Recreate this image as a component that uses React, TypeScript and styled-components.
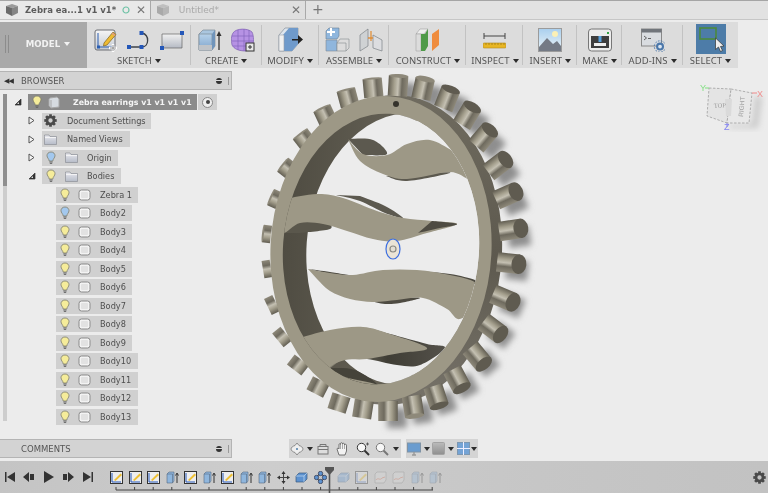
import React from "react";
import styled, { createGlobalStyle } from "styled-components";

const Global = createGlobalStyle`
  html, body { margin: 0; padding: 0; background: #ececec; }
  #root { width: 768px; height: 493px; overflow: hidden; }
`;

const Shell = styled.div`
  width: 768px; height: 493px; display: flex; flex-direction: column; overflow: hidden;
  background: #ececec; font-family: "DejaVu Sans", sans-serif; filter: blur(0.35px);
`;
const TabBar = styled.div`
  height: 18px; display: flex; background: #e2e2e2; border-top: 1px solid #a5a5a5;
  border-bottom: 1px solid #c6c6c6; flex: none;
`;
const Tab = styled.div<{ $w: number; $active?: boolean }>`
  width: ${p => p.$w}px; box-sizing: border-box; display: flex; align-items: center; gap: 6px; padding: 0 4px 0 5px;
  background: ${p => (p.$active ? "#e9e9e9" : "#dfdfdf")}; border-right: 1px solid #a9a9a9;
  font-size: ${p => (p.$active ? 8.5 : 9)}px; font-weight: ${p => (p.$active ? 700 : 400)}; color: ${p => (p.$active ? "#5c5c5c" : "#a9a9a9")};
`;
const TabLabel = styled.span<{ $w: number }>` width: ${p => p.$w}px; white-space: nowrap; `;
const TabX = styled.span` margin-left: auto; font-size: 12px; color: #777; font-weight: 400; line-height: 1; `;
const PlusTab = styled.span` margin-left: 6px; font-size: 14px; color: #777; line-height: 17px; `;

const Toolbar = styled.div`
  display: flex; width: 738px; height: 46px; margin-top: 2px; background: #dcdcdc; flex: none;
`;
const ModelBlock = styled.div`
  width: 87px; background: #a9a9a9; display: flex; align-items: center; justify-content: center; gap: 4px;
  color: #f2f2f2; font-size: 8.6px; font-weight: 700; position: relative; padding: 0 0 2px 9px; box-sizing: border-box;
`;
const Grip = styled.span`
  position: absolute; left: 5px; top: 13px; width: 2px; height: 18px;
  border-left: 1px solid #8c8c8c; border-right: 1px solid #8c8c8c;
`;
const Group = styled.div<{ $w: number; $last?: boolean }>`
  width: ${p => p.$w}px; box-sizing: border-box; display: flex; flex-direction: column; align-items: center;
  position: relative;
  &::after {
    content: ""; display: ${p => (p.$last ? "none" : "block")}; position: absolute; right: 0; top: 3px; bottom: 3px;
    width: 1px; background: #c2c2c2;
  }
`;
const GroupIcons = styled.div<{ $gap?: number }>`
  height: 32px; display: flex; align-items: center; gap: ${p => p.$gap ?? 9}px; padding-top: 3px; box-sizing: border-box;
`;
const GroupLabel = styled.div`
  font-family: "Noto Sans", sans-serif; font-size: 9.5px; color: #555; line-height: 13px; white-space: nowrap;
  display: flex; align-items: center; gap: 3px; letter-spacing: 0.05px;
`;
const Caret = styled.span<{ $c?: string }>`
  display: inline-block; width: 0; height: 0; border-left: 3.5px solid transparent; border-right: 3.5px solid transparent;
  border-top: 4.5px solid ${p => p.$c ?? "#2c2c2c"};
`;
const SelectIcon = styled.div`
  width: 30px; height: 30px; background: #4d7ca8; margin-top: -1px; display: flex;
`;

const Workspace = styled.div` flex: 1; display: flex; min-height: 0; `;
const Sidebar = styled.div`
  width: 232px; flex: none; display: flex; flex-direction: column; padding-top: 3px; box-sizing: border-box; position: relative; z-index: 1;
`;
const PanelHead = styled.div`
  height: 19px; box-sizing: border-box; background: #d3d3d3; border: 1px solid #b4b4b4; border-left: none;
  display: flex; align-items: center; font-size: 8.5px; color: #555; flex: none; padding: 0 2px 0 4px;
`;
const HeadArrow = styled.span` width: 17px; font-size: 7px; color: #333; letter-spacing: -1px; `;
const HeadTitle = styled.span` flex: 1; padding-left: 0; `;
const HeadTitleIndented = styled.span` flex: 1; padding-left: 17px; `;
const HeadBtn = styled.span`
  width: 6px; height: 6px; border-radius: 50%; background: #333; margin-right: 6px;
  &::after { content: ""; display: block; height: 1px; background: #ddd; margin-top: 2.5px; }
`;
const HeadBar = styled.span` width: 1px; height: 8px; background: #999; `;
const TreeArea = styled.div` flex: 1; display: flex; position: relative; min-height: 0; padding-top: 4px; `;
const Scroll = styled.div`
  width: 4px; margin-left: 3px; height: 327px; background: #cdcdcd; position: relative; flex: none;
  &::before { content: ""; position: absolute; left: 0; top: 0; width: 4px; height: 92px; background: #8f8f8f; }
`;
const Tree = styled.div` display: flex; flex-direction: column; `;
const Row = styled.div<{ $indent: number }>`
  height: 18.5px; display: flex; align-items: flex-start; margin-left: ${p => p.$indent}px; position: relative;
`;
const Twist = styled.span`
  width: 14px; height: 16px; display: flex; align-items: center; flex: none;
`;
const Chip = styled.div<{ $w: number; $root?: boolean; $pad?: number }>`
  width: ${p => p.$w}px; height: 16px; box-sizing: border-box; background: ${p => (p.$root ? "#8b8b8b" : "#d0d0d0")};
  display: flex; align-items: center; padding-left: ${p => p.$pad ?? 4}px; font-size: ${p => (p.$root ? 7.85 : 8.2)}px;
  color: ${p => (p.$root ? "#f5f5f5" : "#4e4e4e")}; font-weight: ${p => (p.$root ? 700 : 400)}; white-space: nowrap; flex: none;
`;
const RadioChip = styled.div`
  width: 19px; height: 16px; background: #d0d0d0; display: flex; align-items: center; justify-content: center; margin-left: 1px;
`;
const Radio = styled.span`
  width: 9px; height: 9px; border-radius: 50%; border: 1px solid #888; background: #eee; display: flex; align-items: center; justify-content: center;
  &::after { content: ""; width: 4px; height: 4px; border-radius: 50%; background: #444; }
`;
const IconSlot = styled.span<{ $w: number }>` width: ${p => p.$w}px; display: flex; flex: none; align-items: center; `;
const CommentsHead = styled(PanelHead)` margin-bottom: 3px; `;

const Viewport = styled.div` flex: 1; position: relative; min-width: 0; `;
const Scene = styled.svg` position: absolute; left: 0; top: 0; `;
const NavBars = styled.div`
  position: absolute; left: 57px; bottom: 3px; display: flex; gap: 5px;
`;
const NavBar = styled.div<{ $w: number }>`
  width: ${p => p.$w}px; height: 19px; background: #d4d4d4; display: flex; align-items: center; box-sizing: border-box;
`;
const NavSlot = styled.span<{ $w: number }>` width: ${p => p.$w}px; display: flex; align-items: center; justify-content: center; flex: none; `;

const Timeline = styled.div`
  height: 32px; flex: none; background: linear-gradient(90deg, #c4c4c4, #cdcdcd 35%, #c6c6c6 70%, #c2c2c2); display: flex; align-items: center; position: relative;
`;
const Transport = styled.div` display: flex; width: 110px; box-sizing: border-box; flex: none; margin-top: -1px; `;
const TBtn = styled.span` width: 19.5px; display: flex; justify-content: center; flex: none; `;
const Track = styled.div` display: flex; position: relative; height: 32px; align-items: flex-start; padding-top: 10px; box-sizing: border-box; flex: none; `;
const TItem = styled.span<{ $faded?: boolean; $w: number }>`
  width: ${p => p.$w}px; display: flex; flex: none; opacity: ${p => (p.$faded ? 0.33 : 1)};
`;
const Marker = styled.svg` position: absolute; left: 214px; top: 6px; `;
const Ruler = styled.svg` position: absolute; left: 0; top: 25px; `;
const TimelineGear = styled.span` position: absolute; right: 2px; top: 10px; display: flex; `;

/* ---------- icons ---------- */
const Cube = ({ s = 14, o = 1 }: { s?: number; o?: number }) => (
  <svg width={s} height={s} viewBox="0 0 14 14" opacity={o}>
    <path d="M1 3 L7 1 L13 3 L7 5Z" fill="#9a9a9a" />
    <path d="M1 3 L7 5 V13 L1 10Z" fill="#6a6a6a" />
    <path d="M13 3 L7 5 V13 L13 10Z" fill="#858585" />
  </svg>
);
const Bulb = ({ c = "#f5ec9a" }: { c?: string }) => (
  <svg width="10" height="14" viewBox="0 0 10 14">
    <path d="M5 1 C2.3 1 1 2.9 1 4.7 C1 6.7 3 7.8 3.2 10 H6.8 C7 7.8 9 6.7 9 4.7 C9 2.9 7.7 1 5 1Z" fill={c} stroke="#7d7d6c" strokeWidth="0.8" />
    <path d="M3.4 11 H6.6 M3.8 12.4 H6.2" stroke="#666" strokeWidth="1" />
  </svg>
);
const BodyIcon = () => (
  <svg width="13" height="12" viewBox="0 0 13 12">
    <rect x="1" y="1" width="11" height="10" rx="2.5" fill="#f3f3f3" stroke="#8b8b8b" />
    <rect x="3" y="3" width="7" height="6" rx="1" fill="#e2e2e2" />
  </svg>
);
const RootBody = () => (
  <svg width="12" height="13" viewBox="0 0 12 13">
    <path d="M2 2 L9 1 L11 3 V11 L3 12 L1 10 V3Z" fill="#d6dbe0" stroke="#a7a7a7" />
    <path d="M3 4 V12" stroke="#a7a7a7" />
  </svg>
);
const Folder = () => (
  <svg width="13" height="11" viewBox="0 0 13 11">
    <defs><linearGradient id="fd" x1="0" y1="0" x2="0" y2="1"><stop offset="0" stopColor="#e8e8ee" /><stop offset="1" stopColor="#b6bcc8" /></linearGradient></defs>
    <path d="M0.5 2.5 V1 H5 L6 2.5 H12.5 V10.5 H0.5Z" fill="url(#fd)" stroke="#8c8f96" strokeWidth="0.7" />
    <path d="M1 3.6 H12" stroke="#f5f5f5" />
  </svg>
);
const Gear = ({ s = 13, c = "#555" }: { s?: number; c?: string }) => (
  <svg width={s} height={s} viewBox="0 0 24 24">
    <circle cx="12" cy="12" r="6.5" fill="none" stroke={c} strokeWidth="5" />
    {[0, 45, 90, 135, 180, 225, 270, 315].map(a => (
      <rect key={a} x="9.5" y="0.5" width="5" height="5" fill={c} transform={`rotate(${a} 12 12)`} />
    ))}
  </svg>
);
const TwistOpen = () => (
  <svg width="8" height="8" viewBox="0 0 8 8"><path d="M7 1 V7 H1Z" fill="#333" stroke="#333" strokeWidth="0.7" /><path d="M5 4 V6 H3Z" fill="#ddd" /></svg>
);
const TwistClosed = () => (
  <svg width="7" height="9" viewBox="0 0 7 9"><path d="M1 1 L6 4.5 L1 8Z" fill="#f4f4f4" stroke="#555" /></svg>
);

const SketchIcon = () => (
  <svg width="24" height="24" viewBox="0 0 24 24">
    <defs><linearGradient id="sk" x1="0" y1="0" x2="0" y2="1"><stop offset="0" stopColor="#f6f6f6" /><stop offset="1" stopColor="#c3c9d2" /></linearGradient></defs>
    <rect x="1" y="2" width="20" height="20" rx="2" fill="url(#sk)" stroke="#6c6f75" />
    <path d="M4 5 V19 H18" fill="none" stroke="#2a5db0" strokeWidth="1" />
    <rect x="3" y="17.5" width="3" height="3" fill="#2a5db0" />
    <path d="M10 15 L19 4 L22 6.5 L13 17 L9.5 18Z" fill="#eebb33" stroke="#7d6320" strokeWidth="0.7" />
    <path d="M18 5 L21 7.5" stroke="#d98" strokeWidth="1.6" />
    <path d="M19 16 V24 M15 20 H23" stroke="#fff" strokeWidth="2.4" />
    <path d="M19 17 V23 M16 20 H22" stroke="#777" strokeWidth="0.8" />
  </svg>
);
const LineArc = () => (
  <svg width="24" height="24" viewBox="0 0 24 24">
    <path d="M2 19 H15 C22 19 23 7 15 5 H15" fill="none" stroke="#3d4248" strokeWidth="1.3" />
    <rect x="0" y="17" width="4" height="4" fill="#2457b8" />
    <rect x="12.5" y="17" width="4" height="4" fill="#2457b8" />
    <rect x="12.5" y="3" width="4" height="4" fill="#2457b8" />
  </svg>
);
const RectIcon = () => (
  <svg width="24" height="24" viewBox="0 0 24 24">
    <defs><linearGradient id="rc" x1="0" y1="0" x2="0" y2="1"><stop offset="0" stopColor="#f1f1f1" /><stop offset="1" stopColor="#b5bac4" /></linearGradient></defs>
    <path d="M2 6 H22 V20 H2Z" fill="url(#rc)" stroke="#666" strokeWidth="0.7" />
    <rect x="0" y="18" width="4" height="4" fill="#2457b8" />
    <rect x="20" y="3" width="4" height="4" fill="#2457b8" />
  </svg>
);
const ExtrudeIcon = ({ s = 24 }: { s?: number }) => (
  <svg width={s} height={s} viewBox="0 0 24 24">
    <defs><linearGradient id="ex" x1="0" y1="0" x2="0" y2="1"><stop offset="0" stopColor="#b7d2ea" /><stop offset="1" stopColor="#7ea4cc" /></linearGradient></defs>
    <path d="M1 6 L5 2 H17 V18 L14 22 H1Z" fill="#aac6df" stroke="#7d8a96" strokeWidth="0.7" />
    <path d="M1 6 H14 V22 H1Z" fill="url(#ex)" stroke="#7d8a96" strokeWidth="0.7" />
    <path d="M1 17 H14 V22 H1Z" fill="#bfc3c8" />
    <path d="M14 6 L17 2 V18 L14 22Z" fill="#6f94bb" />
    <path d="M21 22 V5" stroke="#333" strokeWidth="1.3" />
    <path d="M18.5 8 L21 3 L23.5 8Z" fill="#333" />
  </svg>
);
const MeshIcon = () => (
  <svg width="24" height="24" viewBox="0 0 24 24">
    <path d="M2 5 C5 0 17 0 21 4 C23 8 23 15 21 19 L15 23 C8 23 3 21 1 17 C0 12 0 8 2 5Z" fill="#b692e4" stroke="#7c5fb0" strokeWidth="0.7" />
    <path d="M7 2 V22 M13 1 V23 M18 2 V21 M1 8 H22 M1 13 H23 M2 18 H21" stroke="#8565bd" strokeWidth="0.7" />
    <rect x="15" y="15" width="8" height="8" fill="#e8e8e8" stroke="#333" />
    <path d="M17 19 H21 M19 17 V21" stroke="#333" />
  </svg>
);
const ModifyIcon = () => (
  <svg width="25" height="25" viewBox="0 0 25 25">
    <path d="M1 8 L7 1 H20 V17 L14 24 H1Z" fill="#dfe6ee" stroke="#85909c" strokeWidth="0.7" />
    <path d="M5 8 L11 1 H20 V17 L14 24 H5Z" fill="#6f9acb" />
    <path d="M1 8 H6 V24 H1Z" fill="#f0f0f0" stroke="#98a0a8" strokeWidth="0.6" />
    <path d="M14 12 H20 V8 L25 12.5 L20 17 V13.5 H14Z" fill="#222" />
  </svg>
);
const AssembleIcon = () => (
  <svg width="25" height="25" viewBox="0 0 25 25">
    <path d="M1 4 L4 1 H14 V9 L12 12 H1Z" fill="#8fb6dd" stroke="#6a7f93" strokeWidth="0.6" />
    <path d="M1 13 H12 V24 H1Z" fill="#8fb6dd" stroke="#7f8a93" strokeWidth="0.6" />
    <path d="M12 16 L15 12 H24 V21 L21 24 H12Z" fill="#dcdcdc" stroke="#85898d" strokeWidth="0.6" />
    <path d="M12 16 H21 V24" fill="none" stroke="#85898d" strokeWidth="0.6" />
    <path d="M6 1 V9 M2 5 H10" stroke="#fff" strokeWidth="2" />
  </svg>
);
const JointIcon = () => (
  <svg width="24" height="24" viewBox="0 0 24 24">
    <path d="M1 7 L9 1 V18 L1 23Z" fill="#cfd2d4" stroke="#7d8287" strokeWidth="0.7" />
    <path d="M14 7 L23 12 V23 L14 20Z" fill="#dcdde0" stroke="#7d8287" strokeWidth="0.7" />
    <path d="M9 10 H14" stroke="#e08a30" strokeWidth="1.4" />
    <path d="M12 3 V13" stroke="#e08a30" strokeWidth="1.2" />
  </svg>
);
const ConstructIcon = () => (
  <svg width="25" height="24" viewBox="0 0 25 24">
    <path d="M1 6 L5 1 H13 L9 6Z" fill="#eee" stroke="#909090" strokeWidth="0.5" />
    <path d="M1 6 H6 V23 H1Z" fill="#dcdcdc" stroke="#999" strokeWidth="0.5" />
    <path d="M6 6 H10 L13 1 V18 L10 23 H6Z" fill="#4f9a49" />
    <path d="M17 6 L24 1 V17 L17 23Z" fill="#ef8c3e" />
  </svg>
);
const InspectIcon = () => (
  <svg width="23" height="24" viewBox="0 0 23 24">
    <path d="M1 8 H22 M1 5 V11 M22 5 V11" stroke="#444" strokeWidth="1" />
    <rect x="0" y="15" width="23" height="5" rx="1" fill="#e8b624" stroke="#b28a1c" strokeWidth="0.6" />
    <path d="M3 15 V17 M6 15 V17 M9 15 V17 M12 15 V17 M15 15 V17 M18 15 V17 M21 15 V17" stroke="#8a6c13" strokeWidth="0.6" />
  </svg>
);
const InsertIcon = () => (
  <svg width="24" height="24" viewBox="0 0 24 24">
    <defs><linearGradient id="sky" x1="0" y1="0" x2="0" y2="1"><stop offset="0" stopColor="#a9cfee" /><stop offset="1" stopColor="#eef5f8" /></linearGradient></defs>
    <rect x="0.5" y="0.5" width="23" height="23" fill="url(#sky)" stroke="#9b9b9b" />
    <circle cx="17" cy="6" r="3" fill="#fbf0b6" />
    <path d="M1 23 V19 L9 10 L15 16 L19 13 L23 18 V23Z" fill="#747a85" />
  </svg>
);
const MakeIcon = () => (
  <svg width="24" height="24" viewBox="0 0 24 24">
    <rect x="0.5" y="1" width="23" height="22" rx="3" fill="#ececec" stroke="#777" />
    <rect x="3" y="8" width="18" height="12" fill="#3e3e3e" />
    <rect x="6" y="15" width="12" height="3" fill="#eee" />
    <path d="M12 8 V14" stroke="#57a0dd" strokeWidth="3" />
    <rect x="19" y="4" width="2" height="2" fill="#35a345" />
  </svg>
);
const AddInsIcon = () => (
  <svg width="24" height="24" viewBox="0 0 24 24">
    <rect x="0.5" y="1" width="20" height="17" fill="#d9dce0" stroke="#888" />
    <rect x="0.5" y="1" width="20" height="3.5" fill="#71757b" />
    <path d="M3 8 L5.5 10 L3 12 M7 10.5 H10" stroke="#444" fill="none" strokeWidth="0.8" />
    <g transform="translate(14 13.5) scale(0.42)"><circle cx="12" cy="12" r="7" fill="#dbe6f2" stroke="#4c78ab" strokeWidth="5" /></g>
    <circle cx="19" cy="18.5" r="5.7" fill="none" stroke="#4c78ab" strokeWidth="1" strokeDasharray="1.6 1.4" />
  </svg>
);
const SelectGlyph = () => (
  <svg width="30" height="30" viewBox="0 0 30 30">
    <rect x="4" y="4" width="16" height="11" fill="none" stroke="#4c8a3c" strokeWidth="1.6" />
    <path d="M19.5 14 V25.5 L22.5 23 L24.5 27.5 L26.5 26.5 L24.5 22.5 L28 22Z" fill="#eee" stroke="#333" strokeWidth="0.7" />
  </svg>
);

const TSketch = () => (
  <svg width="13" height="13" viewBox="0 0 13 13">
    <rect x="0.5" y="0.5" width="12" height="12" fill="#eee" stroke="#333" />
    <path d="M2 2 V11 H11" stroke="#2457b8" fill="none" />
    <path d="M4 9 L10.5 2.5 L12 4 L5.5 10Z" fill="#eec033" />
  </svg>
);
const TExtrude = () => (
  <svg width="13" height="13" viewBox="0 0 13 13">
    <path d="M1 3 L3 1 H8 V10 L6.5 12 H1Z" fill="#8fb6dd" stroke="#566a80" strokeWidth="0.6" />
    <path d="M1 3 H6.5 V12" fill="none" stroke="#566a80" strokeWidth="0.6" />
    <path d="M11 12 V3 M9.5 4.5 L11 2 L12.5 4.5" stroke="#333" fill="none" />
  </svg>
);
const TMove = () => (
  <svg width="13" height="13" viewBox="0 0 13 13">
    <path d="M6.5 1 V12 M1 6.5 H12" stroke="#444" />
    <path d="M6.5 0 L4.5 3 H8.5Z M6.5 13 L4.5 10 H8.5Z M0 6.5 L3 4.5 V8.5Z M13 6.5 L10 4.5 V8.5Z" fill="#333" />
  </svg>
);
const TCombine = () => (
  <svg width="13" height="13" viewBox="0 0 13 13">
    <path d="M4 2 H12 V8 L9 11 H1 V5Z" fill="#5d92d0" stroke="#3a5a80" strokeWidth="0.7" />
    <path d="M1 5 H9 V11 M9 5 L12 2" stroke="#c5dcf2" fill="none" strokeWidth="0.7" />
  </svg>
);
const TPattern = () => (
  <svg width="13" height="13" viewBox="0 0 13 13">
    <path d="M6.5 2 L11 6.5 L6.5 11 L2 6.5Z" fill="none" stroke="#223" strokeWidth="1" />
    <circle cx="6.5" cy="2.5" r="2.2" fill="#5d92d0" stroke="#223" strokeWidth="0.6" />
    <circle cx="2.5" cy="6.5" r="2.2" fill="#5d92d0" stroke="#223" strokeWidth="0.6" />
    <circle cx="10.5" cy="6.5" r="2.2" fill="#5d92d0" stroke="#223" strokeWidth="0.6" />
    <circle cx="6.5" cy="10.5" r="2.2" fill="#5d92d0" stroke="#223" strokeWidth="0.6" />
  </svg>
);
const TSurface = () => (
  <svg width="13" height="13" viewBox="0 0 13 13">
    <path d="M1 3 L3 1 H12 V9 L10 12 H1Z" fill="#ddd" stroke="#777" strokeWidth="0.7" />
    <path d="M2 9 C4 6 6 10 8 7 L11 6" stroke="#d65a3a" fill="none" strokeWidth="0.8" />
  </svg>
);

const VOrbit = () => (
  <svg width="14" height="14" viewBox="0 0 14 14">
    <path d="M7 1 L9 3.5 C11 4 13 5.5 13 7 C13 8.5 11 10 9 10.5 L7 13 L5 10.5 C3 10 1 8.5 1 7 C1 5.5 3 4 5 3.5Z" fill="#eee" stroke="#777" strokeWidth="0.8" />
    <circle cx="7" cy="7" r="1" fill="#4d7ca8" />
  </svg>
);
const VPage = () => (
  <svg width="12" height="12" viewBox="0 0 12 12">
    <rect x="1" y="3.5" width="10" height="7.5" fill="#ddd" stroke="#777" />
    <path d="M3 3.5 V1.5 H9 V3.5 M1 6.5 H11" stroke="#777" fill="none" />
  </svg>
);
const VHand = () => (
  <svg width="13" height="14" viewBox="0 0 13 14">
    <path d="M3 13 L1 7 C1 6 2.5 6 3 7 V2.5 C3 1.5 4.5 1.5 4.5 2.5 V1.5 C4.5 0.5 6.5 0.5 6.5 1.5 V2 C6.5 1 8.5 1 8.5 2.2 V3 C8.5 2 10.5 2 10.5 3.2 V9 L9 13Z" fill="#f2f2f2" stroke="#555" strokeWidth="0.8" />
    <path d="M4.5 3 V7 M6.5 2 V7 M8.5 3 V7" stroke="#777" strokeWidth="0.6" />
  </svg>
);
const VZoom = ({ plus, c = "#333" }: { plus?: boolean; c?: string }) => (
  <svg width="14" height="14" viewBox="0 0 14 14">
    <circle cx="5.5" cy="5.5" r="4.2" fill="#f7f7f7" stroke={c} strokeWidth="1" />
    <path d="M8.5 8.5 L13 13" stroke={c} strokeWidth="2" />
    {plus && <path d="M11.5 0.5 V3.5 M10 2 H13" stroke="#444" strokeWidth="0.8" />}
  </svg>
);
const VDisplay = () => (
  <svg width="14" height="14" viewBox="0 0 14 14">
    <rect x="0.5" y="1" width="13" height="9" fill="#6a9ccf" stroke="#7f93a6" />
    <path d="M5 13 H9 M7 10 V13" stroke="#999" strokeWidth="1.4" />
  </svg>
);
const VShade = () => (
  <svg width="13" height="13" viewBox="0 0 13 13">
    <defs><linearGradient id="vs" x1="0" y1="0" x2="0" y2="1"><stop offset="0" stopColor="#bbb" /><stop offset="1" stopColor="#8f8f8f" /></linearGradient></defs>
    <rect x="0.5" y="0.5" width="12" height="12" rx="1" fill="url(#vs)" stroke="#a3a3a3" />
  </svg>
);
const VGrid = () => (
  <svg width="13" height="13" viewBox="0 0 13 13">
    <rect x="0.5" y="0.5" width="12" height="12" fill="#74a3d5" stroke="#7d97b0" />
    <path d="M6.5 0 V13 M0 6.5 H13" stroke="#eef" />
  </svg>
);

/* ---------- gear drawing ---------- */
type P = [number, number];
const smooth = (pts: P[], close = true) => {
  let d = `M${pts[0][0]} ${pts[0][1]}`;
  for (let i = 0; i < pts.length - 1; i++) {
    const p0 = pts[Math.max(i - 1, 0)], p1 = pts[i], p2 = pts[i + 1], p3 = pts[Math.min(i + 2, pts.length - 1)];
    const c1: P = [p1[0] + (p2[0] - p0[0]) / 6, p1[1] + (p2[1] - p0[1]) / 6];
    const c2: P = [p2[0] - (p3[0] - p1[0]) / 6, p2[1] - (p3[1] - p1[1]) / 6];
    d += ` C${c1[0].toFixed(1)} ${c1[1].toFixed(1)} ${c2[0].toFixed(1)} ${c2[1].toFixed(1)} ${p2[0]} ${p2[1]}`;
  }
  return close ? d + "Z" : d;
};

const teeth: P[] = [
  [398, 85], [423, 88], [447, 98], [467, 115], [483, 137], [497, 165], [506, 195], [510, 229], [508, 262], [503, 297],
  [492, 327], [477, 355], [457, 378], [436, 395], [413, 405], [388, 410], [363, 408], [339, 402], [318, 386], [298, 364],
  [282, 336], [272, 304], [267, 268], [267, 233], [275, 198], [287, 167], [304, 138], [325, 114], [348, 97], [373, 87],
];

const toothShape = ([x, y]: P, i: number) => {
  const rx = x - 388, ry = y - 248;
  const l = Math.hypot(rx, ry);
  const nx = rx / l, ny = ry / l;
  const ang = (Math.atan2(ny, nx) * 180) / Math.PI + 90;
  const len = nx > 0 ? 20 + 2 * nx : 20 + 12 * nx;
  const w = nx > 0 ? 19.5 : 19.5 + 2 * nx;
  const cap = nx > 0.05 ? 1.5 + 6 * nx : ny < 0 ? 1 : 0;
  return { x, y, ang, len, w, cap, i };
};
const shapes = teeth.map(toothShape);

const GearDrawing = () => (
  <Scene width="536" height="394" viewBox="232 67 536 394">
    <defs>
      <linearGradient id="tooth" x1="0" y1="0" x2="1" y2="0">
        <stop offset="0" stopColor="#625e52" />
        <stop offset="0.3" stopColor="#a39e8c" />
        <stop offset="0.5" stopColor="#c4c0b2" />
        <stop offset="0.7" stopColor="#6e6a5e" />
        <stop offset="1" stopColor="#8e897a" />
      </linearGradient>
      <linearGradient id="wall" x1="0" y1="0" x2="1" y2="0">
        <stop offset="0" stopColor="#4f4c42" />
        <stop offset="0.7" stopColor="#6a665a" />
        <stop offset="1" stopColor="#7c7869" />
      </linearGradient>
      <linearGradient id="outer" x1="0" y1="0" x2="0" y2="1">
        <stop offset="0" stopColor="#6f6b5f" />
        <stop offset="0.5" stopColor="#5d594e" />
        <stop offset="1" stopColor="#77736a" />
      </linearGradient>
      <linearGradient id="strip" x1="0" y1="0" x2="1" y2="0">
        <stop offset="0" stopColor="#8a8677" />
        <stop offset="0.5" stopColor="#3f3d35" />
        <stop offset="1" stopColor="#54514a" />
      </linearGradient>
      <filter id="soft" x="-10%" y="-10%" width="120%" height="120%"><feGaussianBlur stdDeviation="3.2" /></filter>
      <clipPath id="hole"><ellipse cx="381" cy="248" rx="98" ry="135.5" transform="rotate(4 381 248)" /></clipPath>
    </defs>

    <g filter="url(#soft)" fill="#8e8e8e" transform="translate(9 7)">
      {shapes.filter(s => s.x > 380).map(s => (
        <rect key={s.i} x={s.x - s.w / 2} y={s.y - s.len / 2} width={s.w} height={s.len} transform={`rotate(${s.ang} ${s.x} ${s.y})`} />
      ))}
    </g>

    <ellipse cx="391" cy="249" rx="111" ry="155" transform="rotate(3 391 249)" fill="url(#outer)" />

    {shapes.map(s => (
      <g key={s.i} transform={`rotate(${s.ang} ${s.x} ${s.y})`}>
        <rect x={s.x - s.w / 2} y={s.y - s.len / 2} width={s.w} height={s.len} fill="url(#tooth)" />
        {s.cap > 0 && <ellipse cx={s.x} cy={s.y - s.len / 2} rx={s.w / 2} ry={s.cap} fill={s.cap > 3 ? "#5f5b50" : "#8e897a"} />}
      </g>
    ))}

    <ellipse cx="381" cy="248" rx="110.5" ry="153" transform="rotate(3 381 248)" fill="#9d9886" />

    <ellipse cx="381" cy="248" rx="98" ry="135.5" transform="rotate(4 381 248)" fill="url(#wall)" />
    <g clipPath="url(#hole)">
      <ellipse cx="405" cy="248" rx="98.5" ry="136" transform="rotate(4 405 248)" fill="#ececec" />
      <ellipse cx="440" cy="248" rx="70" ry="136" fill="#ececec" />

      <path d={smooth([[348, 138], [373, 139], [387, 153], [363, 154]])} fill="#5c594f" />
      <path d={smooth([[386, 175], [407, 180], [450, 172], [430, 172], [407, 175]])} fill="#5c594f" />
      <path d={smooth([[348, 138], [360, 160], [383, 173], [407, 178], [450, 171], [470, 178], [470, 160], [453, 150], [430, 139], [407, 143], [387, 154], [363, 153], [348, 138]])} fill="#9d9886" />

      <path d={smooth([[336, 194], [360, 200], [385, 212], [403, 217], [385, 205], [360, 195]])} fill="#5c594f" />
      <path d={smooth([[282, 232], [300, 220], [325, 221], [330, 228], [300, 232]])} fill="#5a574c" />
      <path d={smooth([[285, 198], [317, 193], [343, 197], [377, 210], [403, 217], [432, 220], [457, 223], [427, 232], [397, 240], [373, 238], [347, 230], [323, 223], [300, 222], [283, 232], [274, 220]])} fill="#9d9886" />
      <path d={smooth([[432, 220], [457, 223], [440, 227], [418, 232]])} fill="#4e4b42" />

      <path d={smooth([[308, 268], [330, 271], [353, 275], [335, 274]])} fill="#4e4b42" />
      <path d={smooth([[418, 270], [450, 273], [475, 279], [475, 283], [450, 278]])} fill="#4e4b42" />
      <path d={smooth([[370, 300], [385, 303], [400, 302], [420, 297], [400, 297], [385, 299]])} fill="#4e4b42" />
      <path d={smooth([[308, 268], [330, 272], [353, 274], [383, 269], [417, 269], [450, 274], [476, 282], [482, 300], [460, 318], [447, 308], [423, 297], [397, 299], [373, 301], [350, 298], [330, 290], [317, 278]])} fill="#9d9886" />

      <path d={smooth([[330, 367], [345, 358], [367, 358], [397, 364], [420, 364], [445, 347], [427, 343], [390, 333], [363, 327], [340, 335]])} fill="url(#strip)" />
      <path d={smooth([[330, 367], [355, 369], [378, 385], [350, 385]])} fill="#45433a" />
      <path d={smooth([[296, 338], [330, 329], [363, 326], [390, 333], [427, 347], [400, 352], [367, 358], [345, 359], [330, 367], [345, 376], [378, 385], [340, 395], [296, 380]])} fill="#9d9886" />
    </g>

    <circle cx="396" cy="103" r="3" fill="#35332c" />
    <ellipse cx="393" cy="248" rx="7" ry="10" fill="#eae4d6" stroke="#3d6fe0" strokeWidth="1.2" />
    <circle cx="393" cy="248" r="3" fill="#e3dfd4" stroke="#8a8a84" strokeWidth="1.2" />

    <g>
      <path d="M730 124 L752 123 L755 95 L762 96 L758 127 L728 127Z" fill="#c9c9c9" filter="url(#soft)" />
      <path d="M709 87 L731 88 L727 122 L707 115Z" fill="#e4e4e4" stroke="#a0a0a0" strokeDasharray="2.5 1.5" strokeWidth="0.8" />
      <path d="M731 88 L752 92 L749 122 L727 122Z" fill="#e8e8e8" stroke="#a0a0a0" strokeDasharray="2.5 1.5" strokeWidth="0.8" />
      <path d="M725 98 L732 98 L731 115 L726 115Z" fill="#dadada" />
      <text x="0" y="0" transform="translate(714 107) rotate(-4)" fontSize="6.5" fill="#999" fontFamily="Liberation Serif, serif">TOP</text>
      <text x="0" y="0" transform="translate(743 116) rotate(-85)" fontSize="6.5" fill="#999" fontFamily="Liberation Sans, sans-serif">RIGHT</text>
      <path d="M709 87 H705" stroke="#7fe07f" />
      <path d="M752 92 H757" stroke="#f08a8a" />
      <path d="M727 122 V126" stroke="#8a8af0" />
      <text x="700" y="90" fontSize="9" fill="#86e086" fontFamily="Liberation Sans, sans-serif">Y</text>
      <text x="757" y="96" fontSize="9" fill="#f09090" fontFamily="Liberation Sans, sans-serif">X</text>
      <text x="724" y="129" fontSize="9" fill="#8585f0" fontFamily="Liberation Sans, sans-serif">Z</text>
    </g>
  </Scene>
);

/* ---------- data ---------- */
const bodies: { name: string; w: number; blue?: boolean }[] = [
  { name: "Zebra 1", w: 82 }, { name: "Body2", w: 76, blue: true }, { name: "Body3", w: 76 }, { name: "Body4", w: 76 },
  { name: "Body5", w: 76 }, { name: "Body6", w: 76 }, { name: "Body7", w: 76 }, { name: "Body8", w: 76 }, { name: "Body9", w: 76 },
  { name: "Body10", w: 82 }, { name: "Body11", w: 82 }, { name: "Body12", w: 82 }, { name: "Body13", w: 82 },
];

const tlItems: { el: React.ReactNode; faded?: boolean }[] = [
  { el: <TSketch /> }, { el: <TSketch /> }, { el: <TSketch /> }, { el: <TExtrude /> }, { el: <TSketch /> }, { el: <TExtrude /> },
  { el: <TSketch /> }, { el: <TExtrude /> }, { el: <TExtrude /> }, { el: <TMove /> }, { el: <TCombine /> }, { el: <TPattern /> },
  { el: <TCombine />, faded: true }, { el: <TSketch />, faded: true }, { el: <TSurface />, faded: true }, { el: <TSurface />, faded: true },
  { el: <TExtrude />, faded: true }, { el: <TExtrude />, faded: true },
];

const TTri = ({ d }: { d: string }) => (
  <svg width="14" height="12" viewBox="0 0 14 12"><path d={d} fill="#333" /></svg>
);

export default function App() {
  return (
    <>
      <Global />
      <Shell>
        <TabBar>
          <Tab $w={151} $active>
            <Cube />
            <TabLabel $w={91}>Zebra ea...1 v1 v1*</TabLabel>
            <svg width="8" height="8" viewBox="0 0 8 8"><circle cx="4" cy="4" r="3" fill="none" stroke="#6fc2a6" strokeWidth="1.2" /></svg>
            <TabX>✕</TabX>
          </Tab>
          <Tab $w={155}>
            <Cube o={0.45} />
            <TabLabel $w={60}>&nbsp;Untitled*</TabLabel>
            <TabX>✕</TabX>
          </Tab>
          <PlusTab>+</PlusTab>
        </TabBar>

        <Toolbar>
          <ModelBlock><Grip />MODEL <Caret $c="#f2f2f2" /></ModelBlock>
          <Group $w={104}>
            <GroupIcons><SketchIcon /><LineArc /><RectIcon /></GroupIcons>
            <GroupLabel>SKETCH <Caret /></GroupLabel>
          </Group>
          <Group $w={71}>
            <GroupIcons><ExtrudeIcon /><MeshIcon /></GroupIcons>
            <GroupLabel>CREATE <Caret /></GroupLabel>
          </Group>
          <Group $w={57}>
            <GroupIcons><ModifyIcon /></GroupIcons>
            <GroupLabel>MODIFY <Caret /></GroupLabel>
          </Group>
          <Group $w={71}>
            <GroupIcons><AssembleIcon /><JointIcon /></GroupIcons>
            <GroupLabel>ASSEMBLE <Caret /></GroupLabel>
          </Group>
          <Group $w={77}>
            <GroupIcons><ConstructIcon /></GroupIcons>
            <GroupLabel>CONSTRUCT <Caret /></GroupLabel>
          </Group>
          <Group $w={57}>
            <GroupIcons><InspectIcon /></GroupIcons>
            <GroupLabel>INSPECT <Caret /></GroupLabel>
          </Group>
          <Group $w={54}>
            <GroupIcons><InsertIcon /></GroupIcons>
            <GroupLabel>INSERT <Caret /></GroupLabel>
          </Group>
          <Group $w={45}>
            <GroupIcons><MakeIcon /></GroupIcons>
            <GroupLabel>MAKE <Caret /></GroupLabel>
          </Group>
          <Group $w={61}>
            <GroupIcons><AddInsIcon /></GroupIcons>
            <GroupLabel>ADD-INS <Caret /></GroupLabel>
          </Group>
          <Group $w={55} $last>
            <GroupIcons><SelectIcon><SelectGlyph /></SelectIcon></GroupIcons>
            <GroupLabel>SELECT <Caret /></GroupLabel>
          </Group>
        </Toolbar>

        <Workspace>
          <Sidebar>
            <PanelHead>
              <HeadArrow>◀◀</HeadArrow>
              <HeadTitle>BROWSER</HeadTitle>
              <HeadBtn /><HeadBar />
            </PanelHead>
            <TreeArea>
              <Scroll />
              <Tree>
                <Row $indent={7}>
                  <Twist><TwistOpen /></Twist>
                  <Chip $root $w={169} $pad={4}>
                    <IconSlot $w={16}><Bulb /></IconSlot>
                    <IconSlot $w={25}><RootBody /></IconSlot>
                    Zebra earrings v1 v1 v1 v1
                  </Chip>
                  <RadioChip><Radio /></RadioChip>
                </Row>
                <Row $indent={21}>
                  <Twist><TwistClosed /></Twist>
                  <Chip $w={109} $pad={2}>
                    <IconSlot $w={23}><Gear s={13} c="#4a4a4a" /></IconSlot>
                    Document Settings
                  </Chip>
                </Row>
                <Row $indent={21}>
                  <Twist><TwistClosed /></Twist>
                  <Chip $w={88} $pad={2}>
                    <IconSlot $w={23}><Folder /></IconSlot>
                    Named Views
                  </Chip>
                </Row>
                <Row $indent={21}>
                  <Twist><TwistClosed /></Twist>
                  <Chip $w={76}>
                    <IconSlot $w={19}><Bulb c="#a3c8ee" /></IconSlot>
                    <IconSlot $w={22}><Folder /></IconSlot>
                    Origin
                  </Chip>
                </Row>
                <Row $indent={21}>
                  <Twist><TwistOpen /></Twist>
                  <Chip $w={79}>
                    <IconSlot $w={19}><Bulb /></IconSlot>
                    <IconSlot $w={22}><Folder /></IconSlot>
                    Bodies
                  </Chip>
                </Row>
                {bodies.map(b => (
                  <Row $indent={49} key={b.name}>
                    <Chip $w={b.w}>
                      <IconSlot $w={18}><Bulb c={b.blue ? "#a3c8ee" : undefined} /></IconSlot>
                      <IconSlot $w={22}><BodyIcon /></IconSlot>
                      {b.name}
                    </Chip>
                  </Row>
                ))}
              </Tree>
            </TreeArea>
            <CommentsHead>
              <HeadTitleIndented>COMMENTS</HeadTitleIndented>
              <HeadBtn /><HeadBar />
            </CommentsHead>
          </Sidebar>

          <Viewport>
            <GearDrawing />
            <NavBars>
              <NavBar $w={112}>
                <NavSlot $w={16}><VOrbit /></NavSlot>
                <NavSlot $w={10}><Caret /></NavSlot>
                <NavSlot $w={16}><VPage /></NavSlot>
                <NavSlot $w={22}><VHand /></NavSlot>
                <NavSlot $w={20}><VZoom plus /></NavSlot>
                <NavSlot $w={18}><VZoom c="#777" /></NavSlot>
                <NavSlot $w={10}><Caret /></NavSlot>
              </NavBar>
              <NavBar $w={72}>
                <NavSlot $w={16}><VDisplay /></NavSlot>
                <NavSlot $w={9}><Caret /></NavSlot>
                <NavSlot $w={15}><VShade /></NavSlot>
                <NavSlot $w={10}><Caret /></NavSlot>
                <NavSlot $w={14}><VGrid /></NavSlot>
                <NavSlot $w={8}><Caret /></NavSlot>
              </NavBar>
            </NavBars>
          </Viewport>
        </Workspace>

        <Timeline>
          <Transport>
            <TBtn><TTri d="M2 1 H3.5 V11 H2Z M12 1 V11 L4 6Z" /></TBtn>
            <TBtn><TTri d="M7 1 V11 L1 6Z M8 3 H12 V9 H8Z" /></TBtn>
            <TBtn><TTri d="M2 0 L12 6 L2 12Z" /></TBtn>
            <TBtn><TTri d="M7 1 V11 L13 6Z M2 3 H6 V9 H2Z" /></TBtn>
            <TBtn><TTri d="M2 1 V11 L10 6Z M10.5 1 H12 V11 H10.5Z" /></TBtn>
          </Transport>
          <Track>
            {tlItems.map((t, i) => (
              <TItem key={i} $faded={t.faded} $w={i === 11 ? 23 : 18.5}>{t.el}</TItem>
            ))}
            <Ruler width="330" height="8" viewBox="0 0 330 8">
              <path d="M6 4 H323" stroke="#444" strokeWidth="1" />
              {Array.from({ length: 18 }, (_, i) => (
                <path key={i} d={`M${6 + i * 18.6} 1 V4`} stroke="#444" strokeWidth="1" />
              ))}
            </Ruler>
            <Marker width="12" height="26" viewBox="0 0 12 26">
              <path d="M1 0 H10 V3 L5.5 8 L1 3Z" fill="#555" />
              <path d="M5.5 6 V26" stroke="#555" strokeWidth="1.6" />
            </Marker>
          </Track>
          <TimelineGear><Gear s={13} c="#4a4a4a" /></TimelineGear>
        </Timeline>
      </Shell>
    </>
  );
}
